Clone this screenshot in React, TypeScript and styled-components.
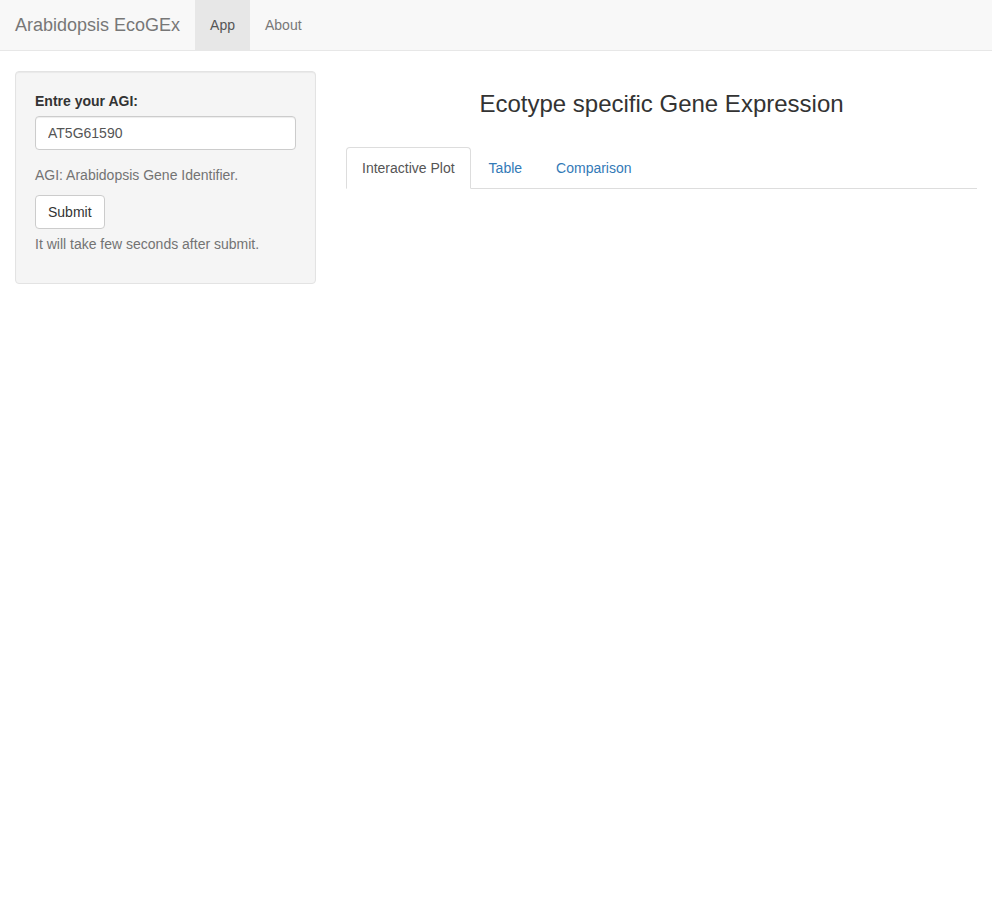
import React from "react";
import styled, { createGlobalStyle } from "styled-components";

const Global = createGlobalStyle`
  * { box-sizing: border-box; }
  html, body { margin: 0; padding: 0; background: #fff; }
  body {
    font-family: "Liberation Sans", Arial, Helvetica, sans-serif;
    font-size: 14px;
    line-height: 1.42857143;
    color: #333;
  }
`;

const Navbar = styled.nav`
  height: 51px;
  background: #f8f8f8;
  border-bottom: 1px solid #e7e7e7;
  display: flex;
  align-items: stretch;
  margin-bottom: 20px;
`;

const Brand = styled.a`
  font-size: 18px;
  line-height: 20px;
  padding: 15px;
  color: #777;
  text-decoration: none;
  height: 50px;
`;

const NavLink = styled.a<{ $active?: boolean }>`
  padding: 15px;
  line-height: 20px;
  height: 50px;
  color: ${(p) => (p.$active ? "#555" : "#777")};
  background: ${(p) => (p.$active ? "#e7e7e7" : "transparent")};
  text-decoration: none;
`;

const Row = styled.div`
  display: flex;
  padding: 0 15px;
  gap: 30px;
`;

const Sidebar = styled.div`
  flex: 0 0 301px;
`;

const Well = styled.form`
  background: #f5f5f5;
  border: 1px solid #e3e3e3;
  border-radius: 4px;
  box-shadow: inset 0 1px 1px rgba(0, 0, 0, 0.05);
  padding: 19px;
  min-height: 20px;
  margin-bottom: 20px;
`;

const FormGroup = styled.div`
  margin-bottom: 15px;
  display: flex;
  flex-direction: column;
`;

const Label = styled.label`
  font-weight: bold;
  margin-bottom: 5px;
`;

const Input = styled.input`
  height: 34px;
  padding: 6px 12px;
  font-size: 14px;
  line-height: 1.42857143;
  color: #555;
  font-family: inherit;
  background: #fff;
  border: 1px solid #ccc;
  border-radius: 4px;
  box-shadow: inset 0 1px 1px rgba(0, 0, 0, 0.075);
  width: 100%;
  outline: none;
`;

const Help = styled.p<{ $tight?: boolean }>`
  color: #737373;
  margin: ${(p) => (p.$tight ? "5px 0 10px" : "0 0 10px")};
`;

const Button = styled.button`
  display: inline-block;
  height: 34px;
  padding: 6px 12px;
  font-size: 14px;
  line-height: 1.42857143;
  font-family: inherit;
  color: #333;
  background: #fff;
  border: 1px solid #ccc;
  border-radius: 4px;
`;

const Main = styled.div`
  flex: 1;
  min-width: 0;
`;

const Title = styled.h3`
  font-size: 24px;
  font-weight: 500;
  line-height: 1.1;
  text-align: center;
  margin: 20px 0 30px;
`;

const Tabs = styled.ul`
  display: flex;
  list-style: none;
  margin: 0;
  padding: 0;
  border-bottom: 1px solid #ddd;
`;

const Tab = styled.li<{ $active?: boolean }>`
  margin-right: 2px;
  margin-bottom: -1px;
  a {
    display: block;
    padding: 10px 15px;
    line-height: 20px;
    border: 1px solid ${(p) => (p.$active ? "#ddd" : "transparent")};
    border-bottom-color: ${(p) => (p.$active ? "transparent" : "transparent")};
    border-radius: 4px 4px 0 0;
    background: ${(p) => (p.$active ? "#fff" : "transparent")};
    color: ${(p) => (p.$active ? "#555" : "#337ab7")};
    text-decoration: none;
  }
`;

export default function App() {
  return (
    <>
      <Global />
      <Navbar>
        <Brand href="#">Arabidopsis EcoGEx</Brand>
        <NavLink href="#" $active>App</NavLink>
        <NavLink href="#">About</NavLink>
      </Navbar>
      <Row>
        <Sidebar>
          <Well onSubmit={(e) => e.preventDefault()}>
            <FormGroup>
              <Label htmlFor="agi">Entre your AGI:</Label>
              <Input id="agi" type="text" defaultValue="AT5G61590" />
            </FormGroup>
            <Help>AGI: Arabidopsis Gene Identifier.</Help>
            <Button type="submit">Submit</Button>
            <Help $tight>It will take few seconds after submit.</Help>
          </Well>
        </Sidebar>
        <Main>
          <Title>Ecotype specific Gene Expression</Title>
          <Tabs>
            <Tab $active><a href="#">Interactive Plot</a></Tab>
            <Tab><a href="#">Table</a></Tab>
            <Tab><a href="#">Comparison</a></Tab>
          </Tabs>
        </Main>
      </Row>
    </>
  );
}
